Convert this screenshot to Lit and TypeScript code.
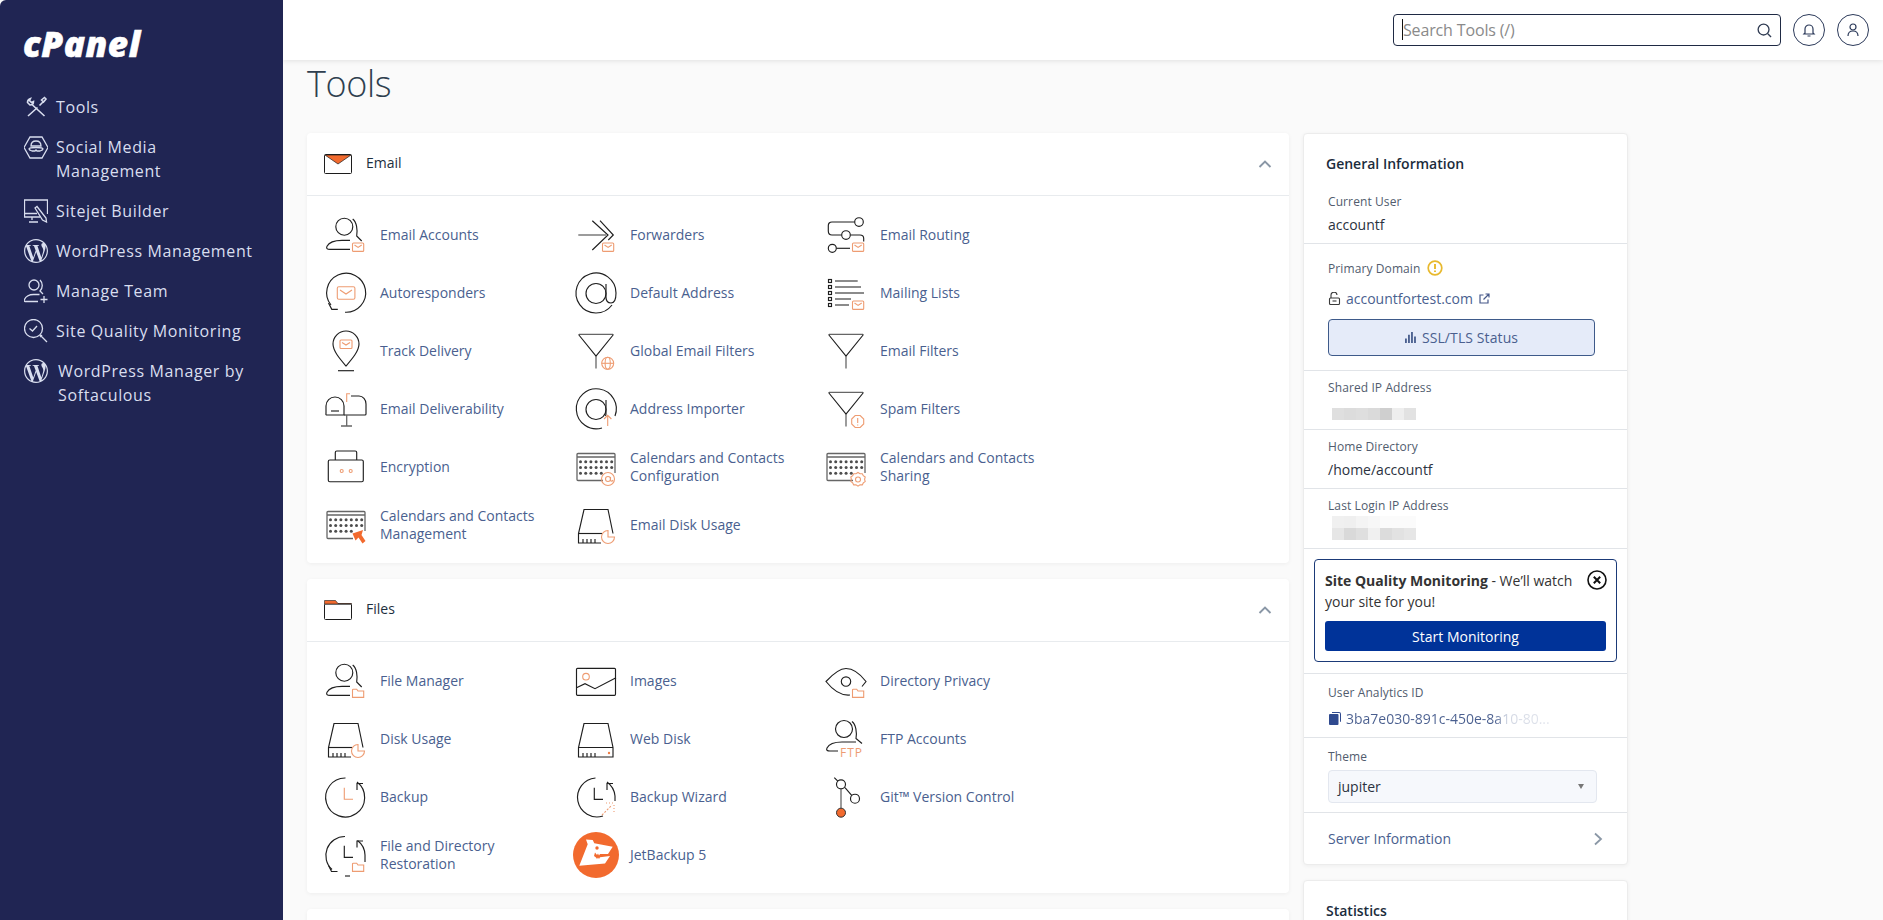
import { LitElement, html, css, svg } from "lit";
import { customElement } from "lit/decorators.js";

const WP = "M21.469 6.825c.84 1.537 1.318 3.3 1.318 5.175 0 3.979-2.156 7.456-5.363 9.325l3.295-9.527c.615-1.54.82-2.771.82-3.864 0-.405-.026-.78-.07-1.11m-7.981.105c.647-.03 1.232-.105 1.232-.105.582-.075.514-.93-.067-.899 0 0-1.755.135-2.88.135-1.064 0-2.85-.15-2.85-.15-.585-.03-.661.855-.075.885 0 0 .54.061 1.125.09l1.68 4.605-2.37 7.08L5.354 6.9c.649-.03 1.234-.1 1.234-.1.585-.075.516-.93-.065-.896 0 0-1.746.138-2.874.138-.2 0-.438-.008-.69-.015C4.911 3.15 8.235 1.215 12 1.215c2.809 0 5.365 1.072 7.286 2.833-.046-.003-.091-.009-.141-.009-1.06 0-1.812.923-1.812 1.914 0 .89.513 1.643 1.06 2.531.411.72.89 1.643.89 2.977 0 .915-.354 1.994-.821 3.479l-1.075 3.585-3.9-11.61.001.014zM12 22.784c-1.059 0-2.081-.153-3.048-.437l3.237-9.406 3.315 9.087c.024.053.05.101.078.149-1.12.393-2.325.609-3.582.609M1.211 12c0-1.564.336-3.05.935-4.39L7.29 21.709C3.694 19.96 1.212 16.271 1.211 12M12 0C5.385 0 0 5.385 0 12s5.385 12 12 12 12-5.385 12-12S18.615 0 12 0";

const envB = svg`<g class="o"><rect x="26.5" y="28" width="11.2" height="8.4" rx="1"/><path d="M28.5 30l3.6 2.4 3.6-2.4"/></g>`;
const folderB = svg`<path class="o" d="M26.5 29v7.4h11.2v-6.4h-5.7l-1.3-1.8h-3.4a.8.8 0 0 0-.8.8z"/>`;
const pieB = svg`<path class="o" stroke-width="1.200" d="M32 25.500a6.500 6.500 0 1 0 6.500 6.500H32z"/>`;
const person = svg`<g class="d"><circle cx="18.300" cy="11.700" r="8.500"/><path d="M26.700 4c4 3 5 11 4 17l5 5"/><path d="M24 34.300H4c-3 0-4-1-3-3 2-4 8-6 15-6h8"/></g>`;
const funnel = svg`<g><path class="g" stroke-width="1.500" d="M3 3.300h34"/><path class="d" d="M2.500 3.500L20 25l17.500-21.500"/><path class="g" stroke-width="1.500" d="M20 25v12.500"/></g>`;
const clockL = (c: string) => svg`<path class=${c} stroke-width="1.300" d="M18.300 10.700V22.300H27"/>`;

const disk = (rest: any, openRight = false) => svg`<g class="d">
  <path d=${openRight ? "M25 38H2.500V28.500L8 4.500h24l5 24" : "M2.500 38V28.500L8 4.500h24l5 24V38z"}/>
  <path d=${openRight ? "M2.500 28.500H26" : "M2.500 28.500H37"}/>
  <path d="M7 34v4M11 34v4M15 34v4M19 34v4"/>
</g>${rest}`;

const kbDots = () => {
  const out: any[] = [];
  [14.7, 20.5, 26.3].forEach((y, r) => {
    for (let i = 0; i < (r === 2 ? 5 : 7); i++) out.push(svg`<circle class="dot" cx=${4.5 + i * 5.2} cy=${y} r="1.500"/>`);
  });
  return out;
};
const keyboard = (badge: any) => svg`<path class="g" stroke-width="1.500" d="M27 33.500H2a1 1 0 0 1-1-1V7.500a1 1 0 0 1 1-1h36a1 1 0 0 1 1 1V26M1 10h38"/>${kbDots()}${badge}`;

const ICONS: Record<string, any> = {
  emailAccounts: svg`${person}${envB}`,
  fileManager: svg`${person}${folderB}`,
  forwarders: svg`<path class="g" stroke-width="1.300" d="M2.300 20H30"/><path class="d" d="M16.300 5.700L32 20 16.300 35"/><path class="d" d="M24 5.700L37.300 20l-5 5"/>${envB}`,
  routing: svg`<g class="d"><circle cx="33" cy="7" r="4.300"/><path d="M28.500 7H6c-2.500 0-3.700 1.500-3.700 3.500V16c0 2.500 1.500 4 3.700 4h9.500"/><circle cx="20" cy="20" r="4.300"/><path d="M24.500 20H34c2.500 0 3.700 1 3.700 3.500v3"/><circle cx="6.300" cy="33.300" r="4"/><path d="M10.500 33.300H24"/></g>${envB}`,
  auto: svg`<path class="d" d="M19 39.200A19.500 19.500 0 1 0 5 32"/><path class="d" d="M2.500 30l3.300 6.300h6"/><g class="o" stroke-width="1.200"><rect x="11.300" y="13.700" width="17.600" height="12.600" rx="1.500"/><path d="M14 17l6 4 6-4"/></g>`,
  at: svg`<g class="d"><path d="M36 32A20 20 0 1 1 40 20c0 6-2 10-5 10-3 0-5-2-5-6V11"/><circle cx="20" cy="20.500" r="10"/></g>`,
  lists: svg`<g class="d" stroke-width="1.200"><rect x="2.500" y="6.500" width="3" height="3"/><rect x="2.500" y="12.500" width="3" height="3"/><rect x="2.500" y="18.500" width="3" height="3"/><rect x="2.500" y="24.500" width="3" height="3"/><rect x="2.500" y="30.500" width="3" height="3"/></g><path class="g" stroke-width="1.300" d="M9 8h22.700M9 14h26M9 20h29M9 26h16M9 32h14"/>${envB}`,
  track: svg`<path class="d" d="M20 35C14 28 7 20 7 13a13 13 0 0 1 26 0c0 7-7 15-13 22z"/><path class="d" d="M12 39.700h16"/><g class="o"><rect x="14" y="9" width="12" height="8.500" rx="1"/><path d="M16 11.500l4 2.500 4-2.500"/></g>`,
  globalFilter: svg`${funnel}<g class="o"><circle cx="31.700" cy="32.300" r="6"/><ellipse cx="31.700" cy="32.300" rx="2.600" ry="6"/><path d="M25.700 32.300h12"/></g>`,
  filter: funnel,
  spam: svg`${funnel}<g class="o"><path d="M29.200 26.500h5l3.500 3.500v5l-3.500 3.500h-5l-3.500-3.500v-5z"/><path d="M31.700 29v5M31.700 35.500v1"/></g>`,
  deliver: svg`<g class="d"><path d="M0 24.500V17a9 9 0 0 1 18 0v9H1a1 1 0 0 1-1-1.500z"/><path d="M25 7h8c4 0 7 3.500 7 8v10a1 1 0 0 1-1 1H18"/><path d="M5 22h8"/></g><path class="g" stroke-width="1.300" d="M20.700 26v11M15 37h11"/><path class="o" stroke-width="1.200" d="M20.700 13V4.700H24"/>`,
  importer: svg`<g class="d"><path d="M26 39A20 20 0 1 1 39 27"/><circle cx="20" cy="20.500" r="10"/><path d="M30 11v13c0 1 0 2-.5 3"/></g><path class="o" stroke-width="1.200" d="M31.700 37V27M28 30l3.700-3.700 3.700 3.700"/>`,
  encrypt: svg`<g class="d"><rect x="2.300" y="13" width="35" height="21.700" rx="1.500"/><path d="M9.300 13V5.500a1.500 1.500 0 0 1 1.500-1.500h18.400a1.500 1.500 0 0 1 1.500 1.500V13"/></g><g class="o"><circle cx="15.700" cy="24" r="1.500"/><circle cx="24.700" cy="24" r="1.500"/></g>`,
  calCfg: keyboard(svg`<g class="o" stroke-width="1.200"><circle cx="32" cy="32" r="6.500"/><circle cx="32" cy="32" r="2.500"/><path d="M34.500 30v3c0 1.500 2 1.500 2.500 0"/></g>`),
  calShare: keyboard(svg`<g class="o" stroke-width="1.200"><path d="M32 25.500l2 1.300 2.300-.1 1 2 1.900 1.300-.6 2.300.6 2.300-1.900 1.300-1 2-2.300-.1-2 1.300-2-1.300-2.300.1-1-2-1.900-1.300.6-2.300-.6-2.300 1.900-1.300 1-2 2.300.1z"/><circle cx="32" cy="32.500" r="2.500"/></g>`),
  calMgmt: keyboard(svg`<path fill="#f26a2e" d="M26.500 28.500l10.500-3.500-1.500 5 4 6-3 2.500-4-6-3 3z"/>`),
  diskUsage: disk(pieB, true),
  webDisk: disk(svg`<circle cx="33" cy="34" r="1.200" fill="#ef7d45"/>`),
  images: svg`<g class="d"><rect x=".5" y="7.300" width="39" height="27" rx="1"/><path d="M.5 26.700l8.500-4 10 5 21-11"/></g><circle class="o" cx="10" cy="15.700" r="3.300"/>`,
  privacy: svg`<path class="d" d="M24 34c-10 1-18-6-24-13.500C6 14 13 7.500 20 7.500c8 0 15 6.500 20 13l-4 5"/><circle class="d" cx="20" cy="20.500" r="4.700"/>${folderB}`,
  ftp: svg`<g class="d"><circle cx="18" cy="10" r="8.500"/><path d="M26 2.500c4 3 5 11 4 17l6 5"/><path d="M12 32H4c-3 0-4-1-3-3 2-4 8-6 15-6h14"/></g><text x="14" y="38" class="ftp">FTP</text>`,
  backup: svg`<path class="d" d="M19.500 1A19.500 19.500 0 1 0 31 5"/><path class="d" d="M31 13V6.500h6"/>${clockL("o")}`,
  wizard: svg`<path class="d" d="M19.500 1A19.500 19.500 0 1 0 27 39"/><path class="d" d="M31 5a19.500 19.500 0 0 1 8 14v5"/><path class="d" d="M31 13V6.500h6"/>${clockL("d")}<path class="o" stroke-dasharray="2 1.500" d="M26 38l10-10"/><path class="o" stroke-dasharray="1 2" d="M30 26h8M38 28v8"/>`,
  restore: svg`<path class="d" d="M19 1.500A19 19 0 0 0 6 34.500"/><path class="d" d="M2.500 30.500l3 6h6"/><path class="d" d="M19 41h5"/><path class="d" d="M31.500 5.500A19 19 0 0 1 39 20v7"/><path class="d" d="M31 12.500V6h6"/>${clockL("d")}${folderB}`,
  jet: svg`<circle cx="20" cy="20" r="23" fill="#f26a2e"/><path fill="#fff" d="M3.300 30.700L11.700 9.300 10 4.500l6.700.5 1.600 3.300 18.400 3.400-4.700 7.300H24l-1 1.500-1-2-1 1.500-2-2.500-1 3.500 2 1.500 1 1.500 1-1.500 1 1.500 1-1.800 10-1.200-5 7.400z"/><circle cx="21" cy="13" r="1.700" fill="#f26a2e"/>`,
  git: svg`<g class="d"><circle cx="15" cy="7.300" r="4.500"/><circle cx="29" cy="21.700" r="4.500"/><path d="M8.300.7l3.500 3.500M19 10.700l6.700 7.600"/></g><path class="g" stroke-width="1.500" d="M15 12v19"/><circle cx="15" cy="35.700" r="4.500" fill="#f26a2e" stroke="#333" stroke-width="1"/>`,
};

const EMAIL: [string, string][] = [
  ["Email Accounts", "emailAccounts"], ["Forwarders", "forwarders"], ["Email Routing", "routing"],
  ["Autoresponders", "auto"], ["Default Address", "at"], ["Mailing Lists", "lists"],
  ["Track Delivery", "track"], ["Global Email Filters", "globalFilter"], ["Email Filters", "filter"],
  ["Email Deliverability", "deliver"], ["Address Importer", "importer"], ["Spam Filters", "spam"],
  ["Encryption", "encrypt"], ["Calendars and Contacts Configuration", "calCfg"], ["Calendars and Contacts Sharing", "calShare"],
  ["Calendars and Contacts Management", "calMgmt"], ["Email Disk Usage", "diskUsage"],
];
const FILES: [string, string][] = [
  ["File Manager", "fileManager"], ["Images", "images"], ["Directory Privacy", "privacy"],
  ["Disk Usage", "diskUsage"], ["Web Disk", "webDisk"], ["FTP Accounts", "ftp"],
  ["Backup", "backup"], ["Backup Wizard", "wizard"], ["Git™ Version Control", "git"],
  ["File and Directory Restoration", "restore"], ["JetBackup 5", "jet"],
];

const wp = svg`<svg class="ni" viewBox="0 0 24 24"><path fill="currentColor" stroke="none" d=${WP}/></svg>`;
const NAV: { t: any; i: any; cls?: string }[] = [
  { t: "Tools", i: svg`<svg class="ni" viewBox="0 0 24 24"><path stroke-width="1.600" d="M4 21l9.500-8.500M15.500 10.500L19 7M17.500 5l2 2 2.500-3-1.500-1.500z"/><path stroke-width="1.600" d="M3.500 7.500c0-2 1-3.500 3-4L5.500 5.500 7.500 7.500l2-1c0 2-1.500 3.500-3.500 3.500zM8.500 10l12 11"/></svg>` },
  { t: html`Social Media<br />Management`, i: svg`<svg class="ni" viewBox="0 0 24 24"><path d="M0 12.500L6 2h12l6 10.500L18 23H6z"/><path d="M7 11c0-3 2-5 5-5s5 2 5 5z"/><path d="M5 14c0-2 14-2 14 0 0 1-3 2-3 2h-3l-1-1-1 1H8s-3-1-3-2z"/></svg>` },
  { t: "Sitejet Builder", i: svg`<svg class="ni" viewBox="0 0 24 24"><path d="M16 18H.5V1h23v14M.5 14.500H13M8 18v3M5 23h9"/><path d="M11 9l2-1.500 9 11.500.5 4-4-2z"/></svg>` },
  { t: "WordPress Management", i: wp },
  { t: "Manage Team", i: svg`<svg class="ni" viewBox="0 0 24 24"><circle cx="10" cy="6" r="5"/><path d="M16 1c3 3 3 8 0 11l3 3M14 22.500H1c-1 0-1-1-.5-2 1-3 5-5 9-5h6M20 17v7M16.500 20.500h7"/></svg>` },
  { t: "Site Quality Monitoring", i: svg`<svg class="ni" viewBox="0 0 24 24"><circle cx="9.500" cy="9.500" r="9"/><path d="M5.500 9.500l3 2.500 4.500-5M16 16l7 7M16 18l2-2"/></svg>` },
  { t: html`WordPress Manager by<br />Softaculous`, i: wp, cls: "wide" },
];

@customElement("app-root")
export class AppRoot extends LitElement {
  static styles = css`
    :host { display: block; height: 920px; overflow: hidden; font-family: "Open Sans", sans-serif; font-size: 14px; color: #1d2f3e; background: #fafafa; }
    * { box-sizing: border-box; }
    .shell { display: grid; grid-template-columns: 283px 1fr; height: 920px; }
    .side { background: #202553; color: #d9deef; border-top-left-radius: 6px; display: flex; flex-direction: column; }
    .logo { font-weight: 800; font-style: italic; font-size: 35px; line-height: 40px; letter-spacing: 0.6px; color: #fff; -webkit-text-stroke: .6px #fff; padding: 24px 0 0 23px; height: 95px; }
    .nav { display: flex; flex-direction: column; gap: 16px; }
    .nav a { display: flex; gap: 8px; padding-left: 24px; font-size: 16px; line-height: 24px; letter-spacing: 0.62px; }
    .nav a.wide { gap: 10px; }
    .ni { width: 24px; height: 24px; flex: none; fill: none; stroke: currentColor; stroke-width: 1.3; }
    .main { min-width: 0; display: flex; flex-direction: column; overflow: hidden; }
    .top { height: 60px; flex: none; background: #fff; box-shadow: 0 1px 5px rgba(0,0,0,.1); display: flex; align-items: center; justify-content: flex-end; padding-right: 14px; gap: 12px; position: relative; z-index: 1; }
    .search { position: relative; width: 388px; height: 32px; }
    .search input { width: 100%; height: 100%; border: 1px solid #1f2a44; border-radius: 4px; padding: 0 30px 0 9px; font: 16px "Open Sans", sans-serif; letter-spacing: -0.15px; outline: none; background: #fff; }
    .search input::placeholder { color: #8a8a8a; opacity: 1; }
    .search .caret { position: absolute; left: 9px; top: 5px; width: 1px; height: 21px; background: #111; }
    .search svg { position: absolute; right: 9px; top: 9px; width: 15px; height: 15px; fill: none; stroke: #2f3b52; stroke-width: 1.400; }
    .round { width: 32px; height: 32px; border: 1px solid #2c3a5a; border-radius: 50%; display: flex; align-items: center; justify-content: center; }
    .round svg { width: 14px; height: 14px; fill: none; stroke: #2c3a5a; stroke-width: 1.200; }
    .content { padding: 0 24px; }
    h1 { font-weight: 300; font-size: 36px; line-height: 48px; letter-spacing: -0.4px; margin: 0 0 25px; color: #2f3f4f; }
    .cols { display: flex; gap: 14px; align-items: flex-start; }
    .left { width: 982px; display: flex; flex-direction: column; gap: 16px; flex: none; }
    .right { width: 325px; display: flex; flex-direction: column; gap: 15px; flex: none; }
    .card { background: #fff; border-radius: 4px; box-shadow: 0 1px 4px rgba(0,0,0,.05); }
    .head { height: 63px; display: flex; align-items: center; padding: 0 17px; border-bottom: 1px solid #e8ebee; gap: 14px; }
    .head span { flex: 1; margin-top: -3px; }
    .head .secic { width: 28px; height: 20px; flex: none; }
    .head .chev { width: 14px; height: 14px; fill: none; stroke: #8a97a6; stroke-width: 1.900; }
    .grid { display: grid; grid-template-columns: repeat(3, 250px); grid-auto-rows: 58px; padding: 10px 19px 9px; }
    .item { display: flex; align-items: center; gap: 14px; line-height: 18px; color: #4a5f8f; padding-right: 20px; }
    .ic { width: 40px; height: 40px; flex: none; overflow: visible; }
    .ic .d { fill: none; stroke: #1f1f1f; stroke-width: 1.150; }
    .ic .g { fill: none; stroke: #666; stroke-width: 1.300; }
    .ic .o { fill: none; stroke: #ee9c72; stroke-width: 1.100; }
    .ic .dot { fill: #4d4d4d; }
    .ic .ftp { fill: #ee9c72; font: 12px "Open Sans", sans-serif; letter-spacing: 1px; }
    .info { border: 1px solid #ececec; }
    .title { font-weight: 600; font-size: 14px; line-height: 20px; color: #1b2c3c; padding-left: 22px; }
    .gi-title { margin-top: 20px; margin-bottom: 19px; }
    .sec { padding: 8px 24px; border-bottom: 1px solid #e1e4e8; }
    .sec.first { padding-top: 0; }
    .lab { font-size: 12px; line-height: 18px; letter-spacing: 0.1px; color: #515c6e; display: flex; align-items: center; gap: 4px; }
    .val { font-size: 14px; line-height: 20px; margin-top: 4px; color: #2b3240; }
    .link { color: #4a5f8f; display: flex; align-items: center; height: 20px; }
    .link .mi { width: 13px; height: 13px; margin-right: 5px; flex: none; }
    .dom { padding-top: 16px; padding-bottom: 14px; }
    .dom .warn { width: 16px; height: 16px; flex: none; margin-left: 3px; margin-top: -2px; }
    .dom .link { margin-top: 10px; }
    .ext { width: 11px; height: 11px; margin-left: 6px; fill: none; stroke: #47598a; stroke-width: 1.200; }
    .ssl { margin-top: 11px; width: 267px; height: 37px; border: 1px solid #3e5a8a; border-radius: 4px; background: #e5ebf9; color: #4a5f8f; display: flex; align-items: center; justify-content: center; gap: 6px; font-size: 14px; letter-spacing: 0.1px; }
    .blur { display: block; width: 100px; height: 24px; margin-left: -10px; overflow: visible; }
    .blur.two { height: 25px; }
    .sqm { padding: 10px 10px 11px; }
    .box { position: relative; border: 1px solid #1b3a78; border-radius: 4px; padding: 10px 10px 10px; }
    .box p { margin: 0 0 9px; line-height: 21px; font-size: 14px; color: #333; padding-right: 24px; }
    .box b { font-weight: 700; }
    .box .x { position: absolute; right: 9px; top: 10px; width: 20px; height: 20px; }
    .go { height: 30px; background: #003399; color: #fff; border-radius: 3px; display: flex; align-items: center; justify-content: center; font-size: 14px; }
    .ana { padding-top: 10px; padding-bottom: 9px; }
    .ana .link { margin-top: 6px; }
    .fade { white-space: nowrap; overflow: hidden; width: 218px; background: linear-gradient(90deg, #4a5f8f 68%, rgba(74,95,143,.25) 74%, rgba(74,95,143,.12) 100%); -webkit-background-clip: text; background-clip: text; color: transparent; }
    .thm { padding: 10px 24px 9px; }
    .select { margin-top: 4px; width: 269px; height: 33px; border: 1px solid #e3e7ef; border-radius: 4px; background: #f6f8fc; padding: 0 9px; display: flex; align-items: center; justify-content: space-between; color: #2b3240; }
    .select i { width: 0; height: 0; border-left: 3.500px solid transparent; border-right: 3.500px solid transparent; border-top: 5px solid #777; margin-right: 3px; }
    .srv { height: 51px; padding: 0 24px; display: flex; align-items: center; justify-content: space-between; color: #4a5f8f; }
    .srv svg { width: 12px; height: 14px; fill: none; stroke: #8a97a6; stroke-width: 1.800; margin-right: -1px; }
    .stat { height: 100px; padding-top: 20px; }
    .blank { height: 100px; }
  `;

  private renderItems(list: [string, string][]) {
    return html`<div class="grid">${list.map(([t, k]) => html`<div class="item"><svg class="ic" viewBox="0 0 40 40">${ICONS[k]}</svg><span>${t}</span></div>`)}</div>`;
  }

  private mosaic(rows: string[][], top: number) {
    return svg`${rows.map((r, y) => r.map((c, x) => svg`<rect x=${14 + x * 12} y=${top + y * 12} width="12" height="12" fill=${c}/>`))}`;
  }

  render() {
    const shared = [["#dfdfdf", "#dcdcdc", "#dedede", "#dadada", "#cfcfcf", "#eeeeee", "#e2e2e2"]];
    const last = [["#f0f0f0", "#efefef", "#f4f4f4", "#f7f7f7", "#fbfbfb", "#fbfbfb", "#fbfbfb"], ["#e6e6e6", "#d9d9d9", "#dfdfdf", "#f0f0f0", "#dcdcdc", "#e2e2e2", "#e6e6e6"]];
    return html`<div class="shell">
      <aside class="side">
        <div class="logo">cPanel</div>
        <nav class="nav">${NAV.map((n) => html`<a class=${n.cls ?? ""}>${n.i}<span>${n.t}</span></a>`)}</nav>
      </aside>
      <div class="main">
        <header class="top">
          <div class="search">
            <input placeholder="Search Tools (/)" /><span class="caret"></span>
            <svg viewBox="0 0 16 16"><circle cx="7" cy="7" r="5.800"/><path d="M11.500 11.500L15 15"/></svg>
          </div>
          <div class="round"><svg viewBox="0 0 14 14"><path d="M3 10V6a4 4 0 0 1 8 0v4l1 1H2zM5.500 13h3"/></svg></div>
          <div class="round"><svg viewBox="0 0 14 14"><circle cx="7" cy="4" r="3"/><path d="M2 13c0-3 2-5 5-5s5 2 5 5"/></svg></div>
        </header>
        <div class="content">
          <h1>Tools</h1>
          <div class="cols">
            <div class="left">
              <section class="card">
                <div class="head">
                  <svg class="secic" viewBox="0 0 28 20"><rect x=".5" y=".5" width="27" height="19" rx="1" fill="#fff" stroke="#1c1c1c"/><path d="M1 1h26L14 10z" fill="#f26a2e" stroke="#1c1c1c" stroke-width=".7"/></svg>
                  <span>Email</span>
                  <svg class="chev" viewBox="0 0 14 14"><path d="M1.500 10L7 4.500 12.500 10"/></svg>
                </div>
                ${this.renderItems(EMAIL)}
              </section>
              <section class="card">
                <div class="head">
                  <svg class="secic" viewBox="0 0 28 20"><rect x=".5" y="4" width="27" height="15.500" rx="1" fill="#fff" stroke="#1c1c1c"/><path d="M.5 4V.5h11L14 3.500h13.500V4z" fill="#f26a2e" stroke="#1c1c1c" stroke-width=".6"/></svg>
                  <span>Files</span>
                  <svg class="chev" viewBox="0 0 14 14"><path d="M1.500 10L7 4.500 12.500 10"/></svg>
                </div>
                ${this.renderItems(FILES)}
              </section>
              <section class="card blank"></section>
            </div>
            <div class="right">
              <section class="card info">
                <div class="title gi-title">General Information</div>
                <div class="sec first"><div class="lab">Current User</div><div class="val">accountf</div></div>
                <div class="sec dom">
                  <div class="lab">Primary Domain
                    <svg class="warn" viewBox="0 0 16 16"><circle cx="8" cy="8" r="6.800" fill="none" stroke="#e8b92e" stroke-width="1.700"/><path d="M8 4v5M8 10.500V12" stroke="#e8b92e" stroke-width="1.900" fill="none"/></svg>
                  </div>
                  <div class="link">
                    <svg class="mi" viewBox="0 0 13 13"><path d="M3 6V3.500a3 3 0 0 1 6-.5" fill="none" stroke="#3a3a3a" stroke-width="1.100"/><rect x="1.500" y="6" width="10" height="6.500" rx="1" fill="none" stroke="#3a3a3a" stroke-width="1.100"/><path d="M4.500 9h4" stroke="#3a3a3a" stroke-width="1.100"/></svg>
                    accountfortest.com
                    <svg class="ext" viewBox="0 0 11 11"><path d="M9 6.500V10H1V2h3.500M4.500 6.500L10 1M6.500 1H10v3.500"/></svg>
                  </div>
                  <div class="ssl"><svg width="11" height="11" viewBox="0 0 12 12"><path fill="#4a5f8f" d="M0 7h2v5H0zM3.300 3h2v9h-2zM6.600 0h2v12h-2zM9.900 5h2v7h-2z"/></svg>SSL/TLS Status</div>
                </div>
                <div class="sec"><div class="lab">Shared IP Address</div><svg class="blur" viewBox="0 0 100 24">${this.mosaic(shared, 11)}</svg></div>
                <div class="sec"><div class="lab">Home Directory</div><div class="val">/home/accountf</div></div>
                <div class="sec"><div class="lab">Last Login IP Address</div><svg class="blur two" viewBox="0 0 100 25">${this.mosaic(last, 1)}</svg></div>
                <div class="sec sqm">
                  <div class="box">
                    <p><b>Site Quality Monitoring</b> - We’ll watch your site for you!</p>
                    <svg class="x" viewBox="0 0 20 20"><circle cx="10" cy="10" r="9" fill="none" stroke="#111" stroke-width="1.600"/><path d="M6.800 6.800l6.400 6.400M13.200 6.800l-6.400 6.400" stroke="#111" stroke-width="2"/></svg>
                    <div class="go">Start Monitoring</div>
                  </div>
                </div>
                <div class="sec ana">
                  <div class="lab">User Analytics ID</div>
                  <div class="link">
                    <svg class="mi" viewBox="0 0 13 13"><path fill="#2f4a8f" d="M4 0h7a2 2 0 0 1 2 2v7a1 1 0 0 1-1 1V2a1 1 0 0 0-1-1H4zM2 2h7.500a1 1 0 0 1 1 1v9a1 1 0 0 1-1 1H2a1 1 0 0 1-1-1V3a1 1 0 0 1 1-1z"/></svg>
                    <span class="fade">3ba7e030-891c-450e-8a10-80...</span>
                  </div>
                </div>
                <div class="sec thm">
                  <div class="lab">Theme</div>
                  <div class="select">jupiter<i></i></div>
                </div>
                <div class="srv">Server Information<svg viewBox="0 0 12 14"><path d="M3 1.500L9 7l-6 5.500"/></svg></div>
              </section>
              <section class="card info stat"><div class="title">Statistics</div></section>
            </div>
          </div>
        </div>
      </div>
    </div>`;
  }
}
